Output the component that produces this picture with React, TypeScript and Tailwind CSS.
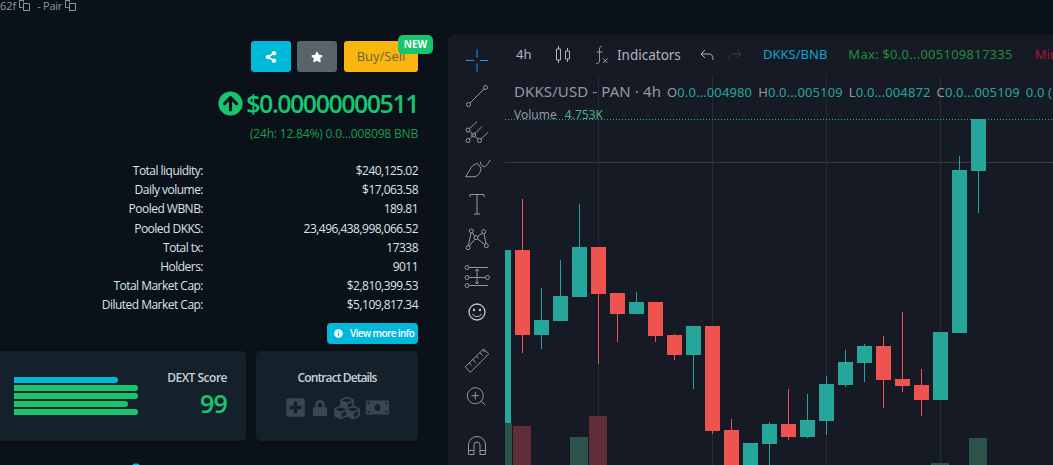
import { FaArrowCircleUp, FaCubes, FaInfoCircle, FaLock, FaMoneyBill, FaPlusSquare, FaShareAlt, FaStar } from 'react-icons/fa';

const stats = [
  ['Total liquidity:', '$240,125.02'],
  ['Daily volume:', '$17,063.58'],
  ['Pooled WBNB:', '189.81'],
  ['Pooled DKKS:', '23,496,438,998,066.52'],
  ['Total tx:', '17338'],
  ['Holders:', '9011'],
  ['Total Market Cap:', '$2,810,399.53'],
  ['Diluted Market Cap:', '$5,109,817.34'],
];

// left, wick top, body top, body bottom, wick bottom, up
const candles: [number, number, number, number, number, boolean][] = [
  [515, 199, 250, 335, 353, false],
  [534, 288, 320, 335, 349, true],
  [553, 260, 296, 321, 321, true],
  [572, 204, 247, 297, 297, true],
  [591, 247, 247, 294, 364, false],
  [610, 293, 293, 314, 342, false],
  [629, 292, 302, 314, 314, true],
  [648, 302, 302, 336, 342, false],
  [667, 334, 335, 355, 360, false],
  [686, 326, 326, 355, 389, true],
  [705, 326, 326, 431, 434, false],
  [724, 419, 430, 470, 470, false],
  [743, 443, 443, 470, 470, true],
  [762, 422, 424, 444, 470, true],
  [781, 389, 424, 437, 440, false],
  [800, 394, 420, 437, 438, true],
  [819, 376, 384, 421, 435, true],
  [838, 350, 362, 385, 387, true],
  [857, 344, 346, 363, 382, true],
  [876, 336, 346, 380, 408, false],
  [895, 312, 379, 386, 392, false],
  [914, 369, 385, 400, 416, false],
  [933, 332, 332, 400, 400, true],
  [952, 156, 170, 333, 333, true],
  [971, 119, 119, 171, 213, true],
];

const volumes: [number, number, number, boolean][] = [
  [505, 7, 423, true],
  [513, 18, 426, false],
  [570, 18, 437, true],
  [589, 18, 416, false],
  [931, 18, 463, true],
  [969, 18, 438, true],
];

function ToolIcon({ children, className = 'mt-2' }: { children: React.ReactNode; className?: string }) {
  return (
    <svg viewBox="0 0 28 28" fill="none" stroke="#9598a1" strokeWidth="1" className={`w-7 h-7 shrink-0 ${className}`}>
      {children}
    </svg>
  );
}

function CopyIcon() {
  return (
    <svg viewBox="0 0 11 11" fill="none" stroke="#8c97a6" strokeWidth="1" className="w-[11px] h-[11px] shrink-0">
      <path d="M3.500 7.500H.500V.500h4v2" />
      <path d="M4.500 3.500h6v7h-6z" />
    </svg>
  );
}

function Chart() {
  return (
    <svg viewBox="505 75 548 390" className="block w-[548px] h-[390px]">
      {[598, 712, 826, 940].map((x) => (
        <rect key={x} x={x} y="75" width="1" height="390" fill="#262a35" />
      ))}
      <rect x="505" y="162" width="548" height="1" fill="#363a45" />
      {volumes.map(([x, w, y, up]) => (
        <rect key={x} x={x} y={y} width={w} height={465 - y} fill={up ? '#2c5249' : '#5f2d38'} />
      ))}
      <rect x="505" y="250" width="6" height="173" fill="#26a69a" />
      {candles.map(([x, wt, bt, bb, wb, up]) => {
        const color = up ? '#26a69a' : '#ef5350';
        return (
          <g key={x} fill={color}>
            <rect x={x + 7} y={wt} width="1" height={wb - wt} />
            <rect x={x} y={bt} width="15" height={bb - bt} />
          </g>
        );
      })}
      <line x1="505" y1="119.5" x2="1053" y2="119.5" stroke="#26a69a" strokeWidth="1" strokeDasharray="1 2" />
    </svg>
  );
}

export default function App() {
  return (
    <div className="w-[1053px] h-[465px] overflow-hidden bg-[#0a1119] flex items-start gap-[30px] font-['Open_Sans',sans-serif]">
      <div className="w-[418px] shrink-0 flex flex-col items-end">
        <div className="self-start h-[11px] flex items-center gap-[3px] text-[11px] leading-[11px] text-[#8c97a6]">
          <span>62f</span>
          <CopyIcon />
          <span className="ml-[4px] tracking-[-0.3px]">- Pair</span>
          <CopyIcon />
        </div>

        <div className="mt-[30px] flex h-[31px]">
          <button className="w-10 rounded-[3px] bg-[#00b8d9] text-white flex items-center justify-center text-[12px]">
            <FaShareAlt />
          </button>
          <button className="w-10 ml-[6px] rounded-[3px] bg-[#5a626b] text-white flex items-center justify-center text-[12px]">
            <FaStar />
          </button>
          <div className="relative ml-[7px]">
            <button className="w-[74px] h-full rounded-[3px] bg-[#f8b60f] text-[#6d6436] text-[13px]">Buy/Sell</button>
            <span className="absolute right-[-15px] top-[-6px] w-[35px] h-[19px] rounded-[5px] bg-[#18c56e] text-white text-[10px] font-bold flex items-center justify-center">
              NEW
            </span>
          </div>
        </div>

        <div className="mt-[15px] h-8 flex items-center text-[#18c56e]">
          <FaArrowCircleUp className="text-[25px] mr-[3px]" />
          <span className="text-[25px] leading-8 font-semibold tracking-[-1.5px]">$0.00000000511</span>
        </div>
        <div className="mt-[7px] h-4 text-[12px] leading-4 tracking-[-0.17px] text-[#1a9e50]">(24h: 12.84%) 0.0...008098 BNB</div>

        <div className="mt-[19px] w-full grid grid-cols-[203px_1fr] text-[12px] leading-[19.2px] text-[#dde3ea] tracking-[-0.52px]">
          {stats.map(([label, value]) => (
            <div key={label} className="contents">
              <div className="text-right">{label}</div>
              <div className="text-right">{value}</div>
            </div>
          ))}
        </div>

        <button className="mt-[8px] w-[91px] h-[21px] rounded-[4px] bg-[#00b8d9] text-white text-[10px] font-semibold tracking-[-0.6px] flex items-center pl-[7px] gap-[7px]">
          <FaInfoCircle className="text-[9px]" />
          View more info
        </button>

        <div className="mt-[7px] w-full h-[90px] flex gap-[10px]">
          <div className="w-[246px] rounded-r-[5px] bg-[#14202a] flex pl-[14px] pr-[19px] justify-between">
            <div className="w-[124px] pt-[26px] flex flex-col gap-[2px]">
              <div className="h-[6px] w-[104px] rounded-r-[3px] bg-[#00b8d9]" />
              <div className="h-[6px] w-[124px] rounded-r-[3px] bg-[#18c56e]" />
              <div className="h-[6px] w-[124px] rounded-r-[3px] bg-[#18c56e]" />
              <div className="h-[6px] w-[114px] rounded-r-[3px] bg-[#18c56e]" />
              <div className="h-[6px] w-[124px] rounded-r-[3px] bg-[#18c56e]" />
            </div>
            <div className="pt-[19px] flex flex-col items-end">
              <div className="text-[12px] leading-4 font-semibold text-[#c5d0de] tracking-[-0.5px]">DEXT Score</div>
              <div className="text-[25px] leading-8 font-semibold text-[#18c56e] mt-px tracking-[-0.8px]">99</div>
            </div>
          </div>
          <div className="w-[162px] rounded-[5px] bg-[#14202a] pt-[19px] flex flex-col items-center">
            <div className="text-[12px] leading-4 font-semibold text-[#c5d0de] tracking-[-0.9px]">Contract Details</div>
            <div className="mt-[9px] flex items-center gap-[6px] text-[#3b4650] text-[21px]">
              <FaPlusSquare />
              <FaLock className="text-[16px]" />
              <FaCubes className="text-[26px]" />
              <FaMoneyBill className="text-[23px]" />
            </div>
          </div>
        </div>

        <div className="self-start mt-[22px] ml-[131px] text-[#00b8d9] text-[10px]">
          <FaInfoCircle />
        </div>
      </div>

      <div className="flex-1 min-w-0 h-[430px] mt-[35px] rounded-tl-[5px] bg-[#161a25] flex font-['Noto_Sans',sans-serif]">
        <div className="w-[57px] shrink-0 flex flex-col items-center pt-[11px] pl-[1px]">
          <ToolIcon className="">
            <path d="M3 14.500h8M17 14.500h8M14 3.500v8M14 17.500v8" stroke="#2196f3" />
          </ToolIcon>
          <ToolIcon>
            <circle cx="22.500" cy="5.500" r="2" />
            <circle cx="5.500" cy="22.500" r="2" />
            <path d="M7 21L21 7" />
          </ToolIcon>
          <ToolIcon>
            <circle cx="5" cy="12" r="2" />
            <circle cx="5" cy="22.500" r="2" />
            <circle cx="16.500" cy="22.500" r="2" />
            <circle cx="10.700" cy="17" r="2" />
            <path d="M6.500 10.500L14 3.500M6.500 21L19 8.500M18 21L25 14.500M6.500 13.500L9.300 15.700M12.200 18.500L15 21" />
          </ToolIcon>
          <ToolIcon>
            <path d="M2.500 22.700h9.500c3-1 6-4 6-8.500l-3.500-4.700c-4 1-6.500 3-8 7z" />
            <path d="M17.300 7.700c0 3 2 5 4 5 2 0 4-4 6-6.700" />
          </ToolIcon>
          <ToolIcon>
            <path d="M7 7V4.500h14V7M14 4.500V24M11 24h6" />
          </ToolIcon>
          <ToolIcon>
            <circle cx="8.300" cy="5" r="2" />
            <circle cx="20.700" cy="5.700" r="2" />
            <circle cx="13" cy="11.700" r="2" />
            <circle cx="5" cy="21.700" r="2" />
            <circle cx="23.300" cy="19.700" r="2" />
            <path d="M9.500 6.800l2.300 3.300M19.300 7.200L14.500 10.500M8 7L5.300 19.700M21 7.700l2 10M11.700 13.300L6.300 20M14.700 13l7 5.500" />
          </ToolIcon>
          <ToolIcon>
            <circle cx="4" cy="5.500" r="2" />
            <circle cx="24.500" cy="15.500" r="2" />
            <circle cx="4" cy="15.500" r="2" />
            <circle cx="4" cy="23.500" r="2" />
            <path d="M6 5.500h19M6 15.500h16.500M6 23.500h19M14 7v15M12 9l2-2 2 2M12 20l2 2 2-2" />
          </ToolIcon>
          <ToolIcon>
            <circle cx="14" cy="14" r="8" stroke="#c3c6cf" strokeWidth="1.300" />
            <circle cx="11" cy="12" r="1.200" fill="#c3c6cf" stroke="none" />
            <circle cx="17" cy="12" r="1.200" fill="#c3c6cf" stroke="none" />
            <path d="M9.500 16c2 3.500 7 3.500 9 0" stroke="#c3c6cf" />
          </ToolIcon>
          <ToolIcon className="mt-5">
            <path d="M2.300 20.700L20.700 3l5 5L7.300 26.300z" />
            <path d="M6.500 17l2 2.500M10 13.500l2.500 3M13.500 10l2 2.500M17 6.700l2.500 3M20 3.700l2 2.500" />
          </ToolIcon>
          <ToolIcon>
            <circle cx="12.300" cy="13.700" r="8" />
            <path d="M8.500 13.700h7.500M12.300 10v7.500M18.300 19.500l4 3.500" />
          </ToolIcon>
          <ToolIcon className="mt-[22px]">
            <path d="M5.500 22.500V13a8.500 8.500 0 0 1 17 0v9.500h-5.500V13a3 3 0 0 0-6 0v9.500z" />
            <path d="M5.500 18.500H11M17 18.500h5.500" />
          </ToolIcon>
        </div>

        <div className="flex-1 min-w-0 relative">
          <div className="h-10 flex items-center text-[13px] text-[#b2b5be] whitespace-nowrap overflow-hidden">
            <span className="ml-[11px] w-[39px] shrink-0">4h</span>
            <svg viewBox="0 0 15 20" fill="none" stroke="#b2b5be" className="w-[15px] h-5 shrink-0">
              <path d="M3.500 1v3M3.500 15v3M1.500 4h4v11h-4zM12.500 3v3M12.500 14v3M10.500 6h4v8h-4z" />
            </svg>
            <svg viewBox="0 0 15 20" fill="none" stroke="#9598a1" className="ml-[24px] w-[15px] h-5 shrink-0">
              <path d="M8 1.500C5.500 1.500 5.500 3 5.500 6v9c0 3-1 3.500-3.500 3.500M2.500 7h6M9 13.500l4.500 4.500M13.500 13.500L9 18" />
            </svg>
            <span className="ml-[8px] w-[62px] text-[13.500px] shrink-0">Indicators</span>
            <svg viewBox="0 0 14 12" fill="none" stroke="#b2b5be" className="ml-[21px] w-[14px] h-3 shrink-0">
              <path d="M5 1L1 5l4 4M1 5h8c3 0 4 2 4 6" />
            </svg>
            <svg viewBox="0 0 14 12" fill="none" stroke="#3a3e4a" className="ml-[14px] w-[14px] h-3 shrink-0">
              <path d="M9 1l4 4-4 4M13 5H5C2 5 1 7 1 11" />
            </svg>
            <span className="ml-[21px] text-[#0aa5d8] shrink-0">DKKS/BNB</span>
            <span className="ml-[21px] text-[#1e8e3e] tracking-[0.25px] shrink-0">Max: $0.0...005109817335</span>
            <span className="ml-[22px] text-[#b0143a] shrink-0">Min: $0.0...</span>
          </div>
          <Chart />
          <div className="absolute left-[9px] top-[46px] whitespace-nowrap text-[13px] leading-5 tracking-[0.12px] text-[#26a69a]">
            <span className="text-[15px] tracking-[0.1px] text-[#9598a1]">DKKS/USD - PAN · 4h</span>
            <span className="ml-[6px] text-[#9598a1]">O</span>0.0...004980
            <span className="ml-[6px] text-[#9598a1]">H</span>0.0...005109
            <span className="ml-[6px] text-[#9598a1]">L</span>0.0...004872
            <span className="ml-[6px] text-[#9598a1]">C</span>0.0...005109
            <span className="ml-[6px]">0.0 (+4.68%)</span>
          </div>
          <div className="absolute left-[9px] top-[70px] whitespace-nowrap text-[12px] leading-5 text-[#9598a1]">
            Volume <span className="ml-[5px] text-[#4caf82]">4.753K</span>
          </div>
        </div>
      </div>
    </div>
  );
}
